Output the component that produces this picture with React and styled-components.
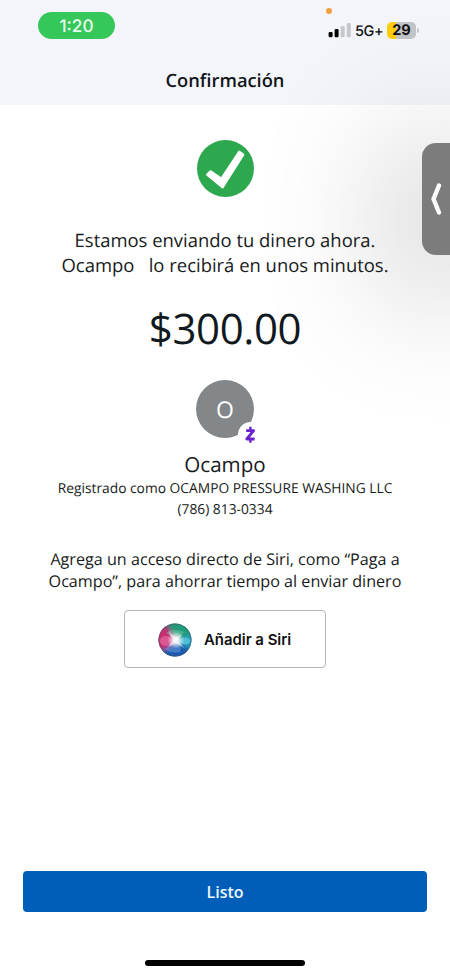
import React from "react";
import styled, { createGlobalStyle } from "styled-components";

export default function App() {
  return (
    <>
      <GlobalStyle />
      <Screen>
        <Header>
          <StatusBar>
            <Clock>1:20</Clock>
            <StatusRight>
              <MicDot />
              <Signal />
              <Network>5G+</Network>
              <Battery>29</Battery>
              <BatteryTip />
            </StatusRight>
          </StatusBar>
          <Title>Confirmación</Title>
        </Header>

        <Content>
          <CheckIcon />
          <Message>
            <Line>Estamos enviando tu dinero ahora.</Line>
            <Line>Ocampo{"\u00a0\u00a0 "}lo recibirá en unos minutos.</Line>
          </Message>
          <Amount>$300.00</Amount>
          <Avatar>
            O
            <ZelleBadge />
          </Avatar>
          <Name>Ocampo</Name>
          <Detail>
            <Line>Registrado como OCAMPO PRESSURE WASHING LLC</Line>
            <Line>(786) 813-0334</Line>
          </Detail>
          <Hint>
            <Line>Agrega un acceso directo de Siri, como “Paga a</Line>
            <Line>Ocampo”, para ahorrar tiempo al enviar dinero</Line>
          </Hint>
          <SiriButton>
            <SiriIcon />
            <span>Añadir a Siri</span>
          </SiriButton>
        </Content>

        <Footer>
          <DoneButton>Listo</DoneButton>
          <HomeIndicator />
        </Footer>

        <SideTab>
          <svg width="12" height="32" viewBox="0 0 12 32" fill="none">
            <path
              d="M9 2.5 3.5 16 9 29.5"
              stroke="#fff"
              strokeWidth="4.4"
              strokeLinecap="round"
              strokeLinejoin="round"
            />
          </svg>
        </SideTab>
      </Screen>
    </>
  );
}

function Signal() {
  return (
    <svg width="23" height="15" viewBox="0 0 23 15">
      <rect x="0.6" y="9" width="4" height="5.3" rx="1.3" fill="#000" />
      <rect x="6.6" y="6" width="4" height="8.3" rx="1.3" fill="#000" />
      <rect x="12.7" y="3" width="4" height="11.3" rx="1.3" fill="#c6c7cb" />
      <rect x="18.8" y="0" width="4" height="14.3" rx="1.3" fill="#c6c7cb" />
    </svg>
  );
}

function CheckIcon() {
  return (
    <svg width="57" height="57" viewBox="0 0 57 57">
      <circle cx="28.5" cy="28.5" r="28.5" fill="#2ea84f" />
      <path
        d="M10 34.8 13.4 31.2 24.4 38.6 42.2 11.6 46.4 14.6 25.6 47.4Z"
        fill="#fff"
        stroke="#fff"
        strokeWidth="2"
        strokeLinejoin="round"
      />
    </svg>
  );
}

function ZelleBadge() {
  return (
    <Badge>
      <svg width="11" height="18" viewBox="0 0 11 18" fill="none" stroke="#6a1fd0">
        <path d="M1.2 4.6h7.4L1.8 13h7.8" strokeWidth="2.8" strokeLinejoin="round" />
        <path d="M5.4 .8v3M5.4 13.6v3.2" strokeWidth="2.4" />
      </svg>
    </Badge>
  );
}

function SiriIcon() {
  return (
    <svg width="34" height="34" viewBox="0 0 34 34">
      <defs>
        <clipPath id="orb">
          <circle cx="17" cy="17" r="16.5" />
        </clipPath>
        <radialGradient id="glow">
          <stop offset="0" stopColor="#fff" />
          <stop offset=".3" stopColor="#fff" stopOpacity=".85" />
          <stop offset="1" stopColor="#fff" stopOpacity="0" />
        </radialGradient>
        <filter id="soft" x="-40%" y="-40%" width="180%" height="180%">
          <feGaussianBlur stdDeviation="2" />
        </filter>
        <filter id="haze" x="-40%" y="-40%" width="180%" height="180%">
          <feGaussianBlur stdDeviation=".6" />
        </filter>
      </defs>
      <g clipPath="url(#orb)">
        <rect width="34" height="34" fill="#47607e" />
        <g filter="url(#soft)">
          <path d="M10 0h24v15L17 15z" fill="#249b78" />
          <path d="M-2 4 8 3l9 13-4 12-15-2z" fill="#c92f72" />
          <path d="M17 17 36 11v12l-7 4z" fill="#2a9dbb" />
          <path d="M6 36 4 28l13-9 15 7-5 10z" fill="#1d5aad" />
        </g>
        <g filter="url(#haze)">
          <ellipse cx="8" cy="18" rx="6" ry="5" fill="#ef82b4" opacity=".5" />
          <ellipse cx="27" cy="18" rx="5" ry="3.6" fill="#66d5ed" opacity=".6" />
          <path d="M8 10Q15 4 26 9L19 17Z" fill="#8edbc3" opacity=".35" />
          <path d="M18 17Q25 23 22 29 13 31 7 26Z" fill="#89b9f2" opacity=".35" />
          <path d="m10 8 8 7 6-4-4 6 6 8-8-5-8 4 5-7z" fill="#fff" opacity=".5" />
        </g>
        <circle cx="18" cy="17" r="8.5" fill="url(#glow)" />
      </g>
      <circle cx="17" cy="17" r="16" fill="none" stroke="#345a67" strokeOpacity=".35" />
    </svg>
  );
}

const GlobalStyle = createGlobalStyle`
  * {
    box-sizing: border-box;
  }

  body {
    margin: 0;
    background: #fff;
    text-rendering: geometricPrecision;
  }
`;

const Screen = styled.div`
  position: relative;
  display: flex;
  flex-direction: column;
  width: 450px;
  height: 975px;
  overflow: hidden;
  background: #fff;
  color: #171b20;
  font-family: "Open Sans", "Noto Sans", sans-serif;
`;

const Header = styled.header`
  height: 105px;
  background: #f4f5fa;
`;

const StatusBar = styled.div`
  display: flex;
  justify-content: space-between;
  height: 67px;
  padding: 12px 31px 0 38px;
`;

const Clock = styled.div`
  width: 77px;
  height: 27px;
  border-radius: 14px;
  background: #35c759;
  color: #e9fbee;
  font-family: Inter, sans-serif;
  font-size: 17.2px;
  font-weight: 500;
  line-height: 29px;
  text-align: center;
`;

const StatusRight = styled.div`
  position: relative;
  display: flex;
  align-items: center;
  height: 36px;
  color: #111;
  font-family: Inter, sans-serif;
`;

const MicDot = styled.span`
  position: absolute;
  top: -4px;
  left: -2px;
  width: 6px;
  height: 6px;
  border-radius: 50%;
  background: #f0a03c;
`;

const Network = styled.span`
  width: 28px;
  margin: 2px 4px 0 4px;
  font-size: 14.5px;
  font-weight: 500;
  letter-spacing: -0.4px;
`;

const Battery = styled.span`
  width: 29px;
  height: 17px;
  border-radius: 5px;
  background: linear-gradient(90deg, #fdcc0b 9px, #c3c4c7 9px);
  font-size: 14.5px;
  font-weight: 700;
  line-height: 18px;
  text-align: center;
`;

const BatteryTip = styled.span`
  width: 2px;
  height: 5px;
  margin-left: 1px;
  border-radius: 0 2px 2px 0;
  background: #c3c4c7;
`;

const Title = styled.h1`
  margin: 0;
  color: #111519;
  font-size: 18.3px;
  font-weight: 600;
  line-height: 28px;
  text-align: center;
`;

const Content = styled.main`
  display: flex;
  flex: 1;
  flex-direction: column;
  align-items: center;
  padding-top: 35px;
`;

const Line = styled.span`
  display: block;
  white-space: nowrap;
`;

const Message = styled.p`
  margin: 31px 0 0;
  font-size: 18.45px;
  line-height: 25px;
  text-align: center;
`;

const Amount = styled.div`
  margin-top: 20px;
  color: #111920;
  font-size: 42px;
  letter-spacing: -0.4px;
  line-height: 61px;
`;

const Avatar = styled.div`
  position: relative;
  width: 58px;
  height: 58px;
  margin-top: 21px;
  border-radius: 50%;
  background: #84878a;
  color: #fff;
  font-size: 23px;
  line-height: 58px;
  text-align: center;
`;

const Badge = styled.span`
  position: absolute;
  top: 42px;
  left: 42px;
  display: flex;
  align-items: center;
  justify-content: center;
  width: 25px;
  height: 25px;
  border-radius: 50%;
  background: #fff;
`;

const Name = styled.div`
  margin-top: 13px;
  font-size: 20.6px;
  line-height: 28px;
`;

const Detail = styled.div`
  font-size: 13.8px;
  line-height: 20.5px;
  text-align: center;
`;

const Hint = styled.p`
  margin: 28px 0 0;
  font-size: 16.15px;
  line-height: 22px;
  text-align: center;
`;

const SiriButton = styled.button`
  display: flex;
  align-items: center;
  gap: 12px;
  width: 202px;
  height: 58px;
  margin-top: 18px;
  padding: 1px 0 0 33px;
  border: 1px solid #b4b5b7;
  border-radius: 4px;
  background: #fff;
  color: #111;
  font-family: Inter, sans-serif;
  font-size: 14.9px;
  font-weight: 600;
  white-space: nowrap;
`;

const Footer = styled.footer`
  display: flex;
  flex-direction: column;
  align-items: center;
  height: 104px;
  padding: 0 23px;
`;

const DoneButton = styled.button`
  width: 100%;
  height: 41px;
  padding: 0;
  border: 0;
  border-radius: 4px;
  background: #005eb8;
  color: #edf6ff;
  font-family: "Open Sans", sans-serif;
  font-size: 16px;
  font-weight: 600;
`;

const HomeIndicator = styled.div`
  width: 160px;
  height: 6px;
  margin-top: 48px;
  border-radius: 3px;
  background: #000;
`;

const SideTab = styled.div`
  position: absolute;
  top: 143px;
  right: -14px;
  width: 42px;
  height: 112px;
  padding: 40px 0 0 8px;
  border-radius: 14px;
  background: #7c7c7c;
  box-shadow: 0 20px 140px 10px rgba(0, 0, 0, 0.42);
`;
